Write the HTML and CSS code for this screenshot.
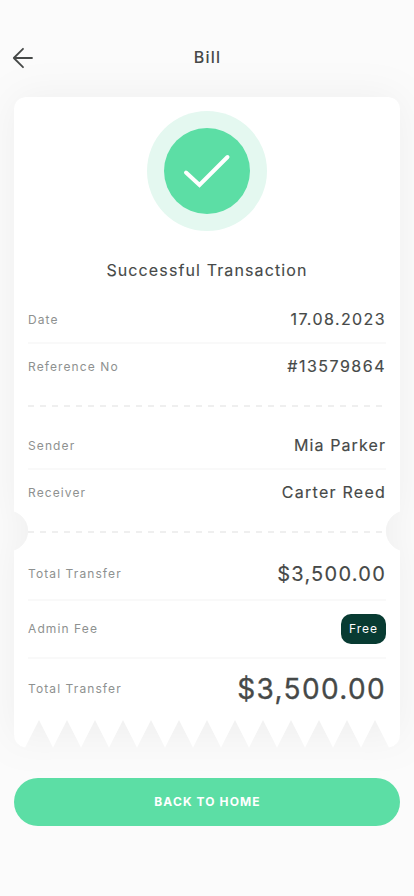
FILE: index.html
```html
<!DOCTYPE html>
<html lang="en">
<head>
<meta charset="utf-8">
<title>Bill</title>
<link rel="stylesheet" href="styles.css">
</head>
<body>
<header class="header">
  <svg class="back" width="22" height="22" viewBox="0 0 22 22"><path d="M20 11H1.8M11 1.8L1.8 11l9.2 9.2"/></svg>
  <h1 class="title">Bill</h1>
</header>
<main class="card">
  <svg class="paper" width="386" height="651" viewBox="0 0 386 651">
    <path d="M14 0H372Q386 0 386 14V414.500A20.500 20.500 0 0 0 386 453.500V636.500Q386 648 375 650.500L361 623L347 650.500L333 623L319 650.500L305 623L291 650.500L277 623L263 650.500L249 623L235 650.500L221 623L207 650.500L193 623L179 650.500L165 623L151 650.500L137 623L123 650.500L109 623L95 650.500L81 623L67 650.500L53 623L39 650.500L25 623L11 650.500Q0 648 0 636.500V453.500A20.500 20.500 0 0 0 0 414.500V14Q0 0 14 0Z"/>
  </svg>
  <div class="content">
    <svg class="success" width="120" height="120" viewBox="0 0 120 120"><circle class="halo" cx="60" cy="60" r="60"/><circle class="disc" cx="60" cy="60" r="43"/><path class="tick" d="M39 61.500L52.500 74L80.500 46"/></svg>
    <h2 class="status">Successful Transaction</h2>
    <div class="row line"><span class="label">Date</span><span class="value date">17.08.2023</span></div>
    <div class="row"><span class="label">Reference No</span><span class="value ref">#13579864</span></div>
    <div class="dashes"></div>
    <div class="row line"><span class="label">Sender</span><span class="value">Mia Parker</span></div>
    <div class="row"><span class="label">Receiver</span><span class="value name">Carter Reed</span></div>
    <div class="dashes"></div>
    <div class="row line total"><span class="label">Total Transfer</span><span class="value medium">$3,500.00</span></div>
    <div class="row line fee"><span class="label">Admin Fee</span><span class="badge">Free</span></div>
    <div class="row final"><span class="label">Total Transfer</span><span class="value large">$3,500.00</span></div>
  </div>
</main>
<button class="home">BACK TO HOME</button>
</body>
</html>
```
FILE: styles.css
```css
* { box-sizing: border-box; }
body {
  margin: 0;
  width: 414px;
  height: 896px;
  padding: 0 14px;
  overflow: hidden;
  background: #fbfbfb;
  color: #464948;
  font-family: Inter, Roboto, sans-serif;
}
.header {
  height: 97px;
  padding-top: 46px;
  display: grid;
  grid-template-columns: 22px 1fr 22px;
  align-items: start;
}
.back {
  margin: 1px 0 0 -2px;
  fill: none;
  stroke: #464948;
  stroke-width: 1.8;
  stroke-linecap: round;
  stroke-linejoin: round;
}
.title {
  margin: 0;
  padding-left: 1px;
  text-align: center;
  font-size: 16px;
  line-height: 22px;
  font-weight: 500;
  letter-spacing: 1.2px;
}
.card {
  position: relative;
  height: 651px;
}
.paper {
  position: absolute;
  top: 0;
  left: 0;
  overflow: visible;
  fill: #fff;
  filter: drop-shadow(0 0 20px rgba(0, 0, 0, .05));
}
.content {
  position: relative;
  padding: 14px 14px 0;
}
.success { display: block; margin: 0 auto; }
.halo { fill: #e4f8f0; }
.disc { fill: #5cdea5; }
.tick {
  fill: none;
  stroke: #fff;
  stroke-width: 4;
  stroke-linecap: round;
  stroke-linejoin: miter;
}
.status {
  margin: 28px 0 15px;
  text-align: center;
  white-space: nowrap;
  font-size: 16px;
  line-height: 22px;
  font-weight: 400;
  letter-spacing: 1.12px;
  -webkit-text-stroke: .12px currentColor;
}
.row {
  height: 44px;
  display: flex;
  align-items: center;
  justify-content: space-between;
  white-space: nowrap;
}
.line { height: 48px; border-bottom: 2px solid #f9f9f9; }
.label {
  color: #8e9190;
  font-size: 12px;
  letter-spacing: 1.1px;
}
.value {
  font-size: 16px;
  font-weight: 400;
  letter-spacing: 1.1px;
  -webkit-text-stroke: .15px currentColor;
}
.name { letter-spacing: 1.25px; }
.date { letter-spacing: 1.4px; }
.ref { letter-spacing: 1.5px; }
.dashes {
  height: 2px;
  margin: 17px 0 15px;
  background: repeating-linear-gradient(90deg, #efefef 0 6px, transparent 6px 12px);
}
.total { height: 53px; }
.fee { height: 58px; }
.fee .label, .final .label { margin-top: -2px; }
.final { height: 60px; }
.medium { font-size: 20px; letter-spacing: 1.25px; }
.large { font-size: 28px; letter-spacing: 1.35px; -webkit-text-stroke-width: .3px; }
.badge {
  width: 45px;
  height: 30px;
  border-radius: 10px;
  background: #083b32;
  color: #fff;
  font-size: 12px;
  line-height: 30px;
  text-align: center;
  letter-spacing: 1px;
}
.home {
  display: block;
  position: relative;
  width: 386px;
  height: 48px;
  margin-top: 30px;
  padding: 0 0 2px 1px;
  border: 0;
  border-radius: 24px;
  background: #5cdea5;
  color: #fff;
  font-family: inherit;
  font-size: 12px;
  font-weight: 700;
  letter-spacing: 1.1px;
}
```
